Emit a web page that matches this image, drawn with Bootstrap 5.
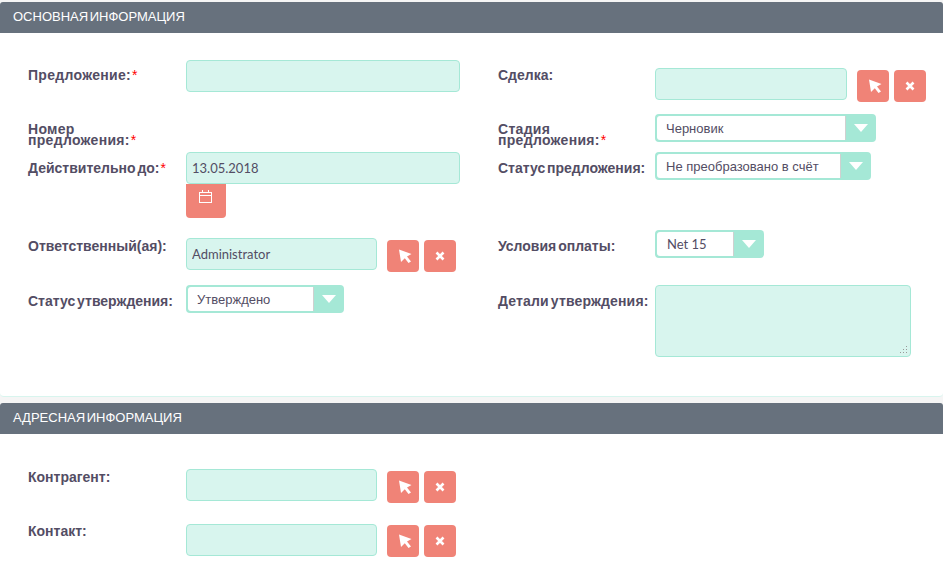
<!DOCTYPE html>
<html lang="ru">
<head>
    <meta charset="UTF-8">
    <meta name="viewport" content="width=device-width, initial-scale=1.0">
    <title>Предложение</title>
    <link rel="stylesheet" href="https://cdn.jsdelivr.net/npm/bootstrap@5.3.0/dist/css/bootstrap.min.css">
    <style>
        body { background: #f5f5f5; font-family: "Liberation Sans", sans-serif; color: #534d64; padding-top: 2px; overflow: hidden; }
        .sect-head { background: #67717d; color: #fff; height: 31px; line-height: 29px; padding-left: 13px; font-size: 13px; word-spacing: -2px; border-radius: 3px 3px 0 0; }
        .sect-body { background: #fff; }
        .sect-main { height: 364px; border-bottom: 1px solid #d8f5ee; border-radius: 0 0 4px 4px; margin-bottom: 6px; }
        .sect-addr { height: 140px; padding: 35px 0 0 28px; }
        .side-left { width: 470px; padding: 27px 0 0 28px; }
        .side-right { width: 473px; padding: 35px 0 0 28px; }
        .fld { display: flex; align-items: flex-start; }
        .fld-label { width: 158px; flex: none; margin: 0; font-weight: 700; font-size: 14px; word-spacing: -2px; line-height: 11px; padding-top: 11px; }
        .fld-label b { color: #f00; font-weight: 400; margin-left: 1px; }
        .lbl-wide { letter-spacing: .3px; }
        .lbl-wider { letter-spacing: .15px; }
        .side-right .fld-label { width: 157px; }
        .fld-input.form-control { height: 32px; padding: 0 5px; background: #d8f5ee; border: 1px solid #a5e8d6; border-radius: 4px; color: #534d64; font-family: Lato, sans-serif; font-size: 13px; box-shadow: none; }
        .fld-area.form-control { width: 256px; height: 72px; padding: 5px; resize: none; border: 1px solid #a5e8d6; border-radius: 4px; background: #d8f5ee url("data:image/svg+xml,%3Csvg xmlns='http://www.w3.org/2000/svg' width='9' height='9'%3E%3Cpath d='M7 1h1v1H7zM7 4h1v1H7zM4 4h1v1H4zM7 7h1v1H7zM4 7h1v1H4zM1 7h1v1H1z' fill='%23999'/%3E%3C/svg%3E") no-repeat right 2px bottom 2px; }
        .wide-input { width: 274px; flex: none; }
        .mid-input { width: 191px !important; flex: none; }
        .side-right .mid-input { width: 192px !important; }
        .pick-btn.btn { width: 32px; height: 32px; padding: 0; margin: 2px 0 0 5px; background: #f08377; border: 0; border-radius: 4px; display: flex; align-items: center; justify-content: center; flex: none; }
        .pick-first.btn { margin-left: 10px; padding-left: 4px; }
        .row-contact .pick-btn.btn { margin-top: 1px; }
        .cal-btn.btn { width: 40px; height: 34px; padding: 0 2px 10px 0; background: #f08377; border: 0; border-radius: 0 0 4px 4px; display: flex; align-items: center; justify-content: center; }
        .drop { display: flex; height: 28px; background: #a5e8d6; border-radius: 4px; padding: 2px 0 2px 2px; flex: none; }
        .drop-sel { flex: 1; min-width: 0; height: 24px; border: 0; border-right: 1px solid #d0d0d0; background: #fff; border-radius: 3px 0 0 3px; padding: 1px 0 0 9px; font-family: "Liberation Sans", sans-serif; font-size: 13px; color: #534d64; appearance: none; outline: none; }
        .drop-arrow { width: 30px; flex: none; display: flex; align-items: center; justify-content: center; }
        .drop-latin .drop-sel { font-family: Lato, sans-serif; font-size: 13px; padding-left: 10px; }
        .drop-158 { width: 158px; }
        .drop-221 { width: 221px; }
        .drop-216 { width: 216px; }
        .drop-109 { width: 109px; }
        .row-l1 { height: 32px; }
        .row-l1 .fld-label { padding-top: 10px; }
        .row-l2 { height: 60px; }
        .row-l2 .fld-label { padding-top: 32px; }
        .row-l3 { height: 86px; }
        .row-l4 { height: 47px; }
        .row-l4 .fld-label { padding-top: 3px; }
        .row-r1 { height: 46px; }
        .row-r1 .fld-label { padding-top: 2px; }
        .row-r2 { height: 38px; }
        .row-r2 .fld-label { padding-top: 10px; }
        .row-r3 { height: 78px; }
        .row-r4 { height: 55px; }
        .row-a1 { height: 55px; }
        .row-a1 .fld-label { padding-top: 3px; }
        .row-a1.row-contact .fld-label { padding-top: 2px; }
    </style>
</head>
<body>

<svg width="0" height="0" class="position-absolute">
    <symbol id="ico-cursor" viewBox="0 0 14 14"><path d="M1 0.5 L13.5 5 L9 7.5 L13 12.5 L10.5 14 L6.8 9.3 L3 13 Z" fill="#fff"/></symbol>
    <symbol id="ico-x" viewBox="0 0 10 10"><path d="M1.5 1.5 L8.5 8.5 M8.5 1.5 L1.5 8.5" stroke="#fff" stroke-width="2.6" fill="none"/></symbol>
    <symbol id="ico-down" viewBox="0 0 14 8"><path d="M0 0H14L7 8Z" fill="#fff"/></symbol>
</svg>

<!-- Основная информация -->
<div class="sect-head">ОСНОВНАЯ ИНФОРМАЦИЯ</div>
<div class="sect-body sect-main d-flex">
    <div class="side-left">
        <div class="fld row-l1">
            <label class="fld-label lbl-wide">Предложение:<b>*</b></label>
            <input type="text" class="form-control fld-input wide-input">
        </div>
        <div class="fld row-l2">
            <label class="fld-label lbl-wide">Номер<br>предложения:<b>*</b></label>
        </div>
        <div class="fld row-l3">
            <label class="fld-label">Действительно до:<b>*</b></label>
            <div class="wide-input">
                <input type="text" class="form-control fld-input" value="13.05.2018">
                <button type="button" class="btn cal-btn">
                    <svg width="15" height="15" viewBox="0 0 15 15" fill="none" stroke="#fff" stroke-width="1"><rect x="1.5" y="3.5" width="12" height="10"/><path d="M1.5 6.5H13.5M4.5 1V4M10.5 1V4"/></svg>
                </button>
            </div>
        </div>
        <div class="fld row-l4">
            <label class="fld-label">Ответственный(ая):</label>
            <input type="text" class="form-control fld-input mid-input" value="Administrator">
            <button type="button" class="btn pick-btn pick-first"><svg width="14" height="14"><use href="#ico-cursor"/></svg></button>
            <button type="button" class="btn pick-btn"><svg width="10" height="10"><use href="#ico-x"/></svg></button>
        </div>
        <div class="fld">
            <label class="fld-label">Статус утверждения:</label>
            <div class="drop drop-158">
                <select class="drop-sel"><option>Утверждено</option></select>
                <span class="drop-arrow"><svg width="14" height="8"><use href="#ico-down"/></svg></span>
            </div>
        </div>
    </div>
    <div class="side-right">
        <div class="fld row-r1">
            <label class="fld-label">Сделка:</label>
            <input type="text" class="form-control fld-input mid-input">
            <button type="button" class="btn pick-btn pick-first"><svg width="14" height="14"><use href="#ico-cursor"/></svg></button>
            <button type="button" class="btn pick-btn"><svg width="10" height="10"><use href="#ico-x"/></svg></button>
        </div>
        <div class="fld row-r2">
            <label class="fld-label lbl-wide">Стадия<br>предложения:<b>*</b></label>
            <div class="drop drop-221">
                <select class="drop-sel"><option>Черновик</option></select>
                <span class="drop-arrow"><svg width="14" height="8"><use href="#ico-down"/></svg></span>
            </div>
        </div>
        <div class="fld row-r3">
            <label class="fld-label">Статус предложения:</label>
            <div class="drop drop-216">
                <select class="drop-sel"><option>Не преобразовано в счёт</option></select>
                <span class="drop-arrow"><svg width="14" height="8"><use href="#ico-down"/></svg></span>
            </div>
        </div>
        <div class="fld row-r4">
            <label class="fld-label">Условия оплаты:</label>
            <div class="drop drop-109 drop-latin">
                <select class="drop-sel"><option>Net 15</option></select>
                <span class="drop-arrow"><svg width="14" height="8"><use href="#ico-down"/></svg></span>
            </div>
        </div>
        <div class="fld">
            <label class="fld-label lbl-wider">Детали утверждения:</label>
            <textarea class="form-control fld-area"></textarea>
        </div>
    </div>
</div>

<!-- Адресная информация -->
<div class="sect-head">АДРЕСНАЯ ИНФОРМАЦИЯ</div>
<div class="sect-body sect-addr">
    <div class="fld row-a1">
        <label class="fld-label">Контрагент:</label>
        <input type="text" class="form-control fld-input mid-input">
        <button type="button" class="btn pick-btn pick-first"><svg width="14" height="14"><use href="#ico-cursor"/></svg></button>
        <button type="button" class="btn pick-btn"><svg width="10" height="10"><use href="#ico-x"/></svg></button>
    </div>
    <div class="fld row-a1 row-contact">
        <label class="fld-label">Контакт:</label>
        <input type="text" class="form-control fld-input mid-input">
        <button type="button" class="btn pick-btn pick-first"><svg width="14" height="14"><use href="#ico-cursor"/></svg></button>
        <button type="button" class="btn pick-btn"><svg width="10" height="10"><use href="#ico-x"/></svg></button>
    </div>
</div>

<script src="https://cdn.jsdelivr.net/npm/bootstrap@5.3.0/dist/js/bootstrap.bundle.min.js"></script>
</body>
</html>
